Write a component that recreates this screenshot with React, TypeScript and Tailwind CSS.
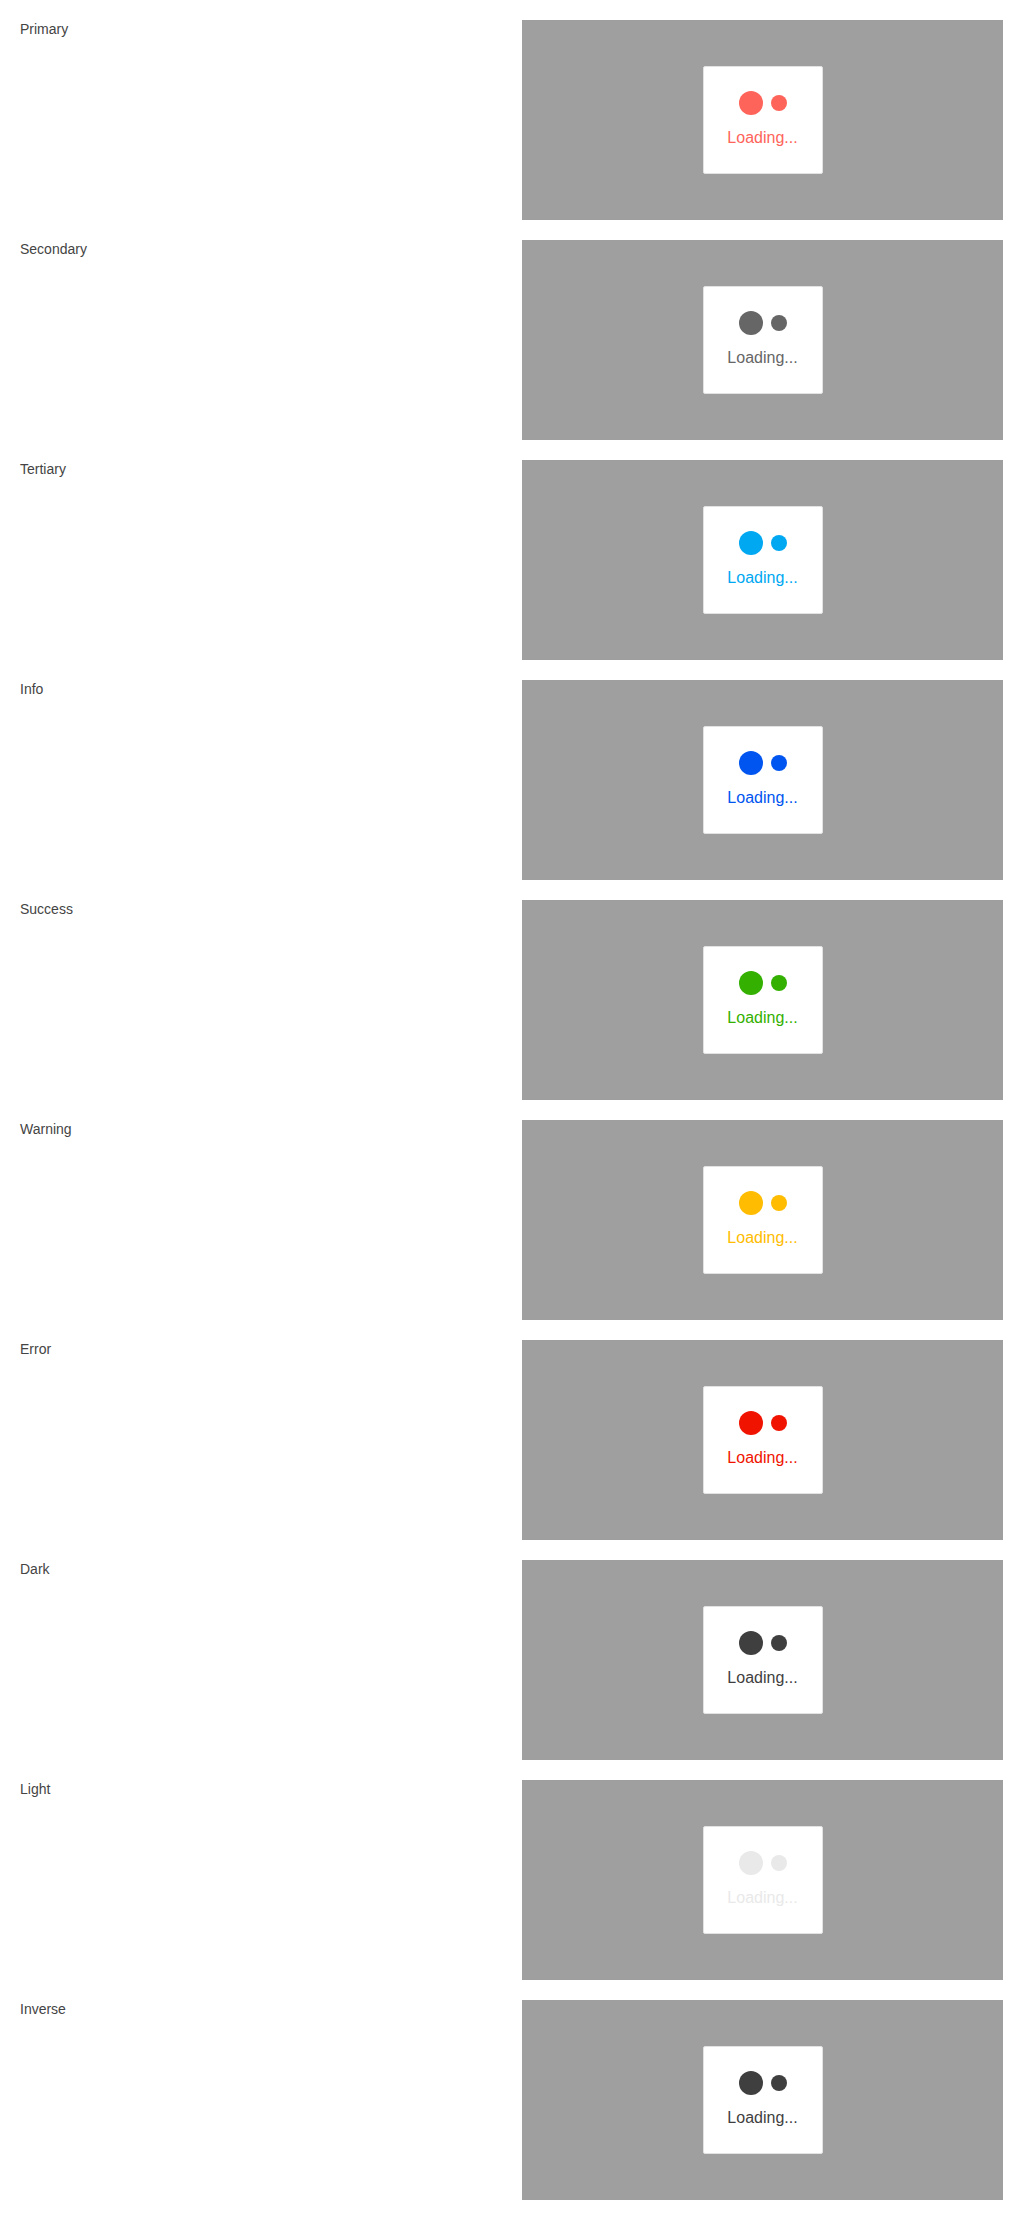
import React from "react";

const rows: { label: string; dot: string; text: string }[] = [
  { label: "Primary", dot: "bg-[#ff645a]", text: "text-[#ff645a]" },
  { label: "Secondary", dot: "bg-[#666666]", text: "text-[#666666]" },
  { label: "Tertiary", dot: "bg-[#00a8f2]", text: "text-[#00a8f2]" },
  { label: "Info", dot: "bg-[#0055f0]", text: "text-[#0055f0]" },
  { label: "Success", dot: "bg-[#33b000]", text: "text-[#33b000]" },
  { label: "Warning", dot: "bg-[#ffbc00]", text: "text-[#ffbc00]" },
  { label: "Error", dot: "bg-[#f01400]", text: "text-[#f01400]" },
  { label: "Dark", dot: "bg-[#3f3f3f]", text: "text-[#3f3f3f]" },
  { label: "Light", dot: "bg-[#e9e9e9]", text: "text-[#e9e9e9]" },
  { label: "Inverse", dot: "bg-[#3f3f3f]", text: "text-[#3f3f3f]" },
];

export default function App() {
  return (
    <div className="w-[1024px] bg-white pt-5 font-['Liberation_Sans',Arial,sans-serif]">
      {rows.map((r) => (
        <div key={r.label} className="flex h-[220px] pb-5">
          <div className="w-[522px] pl-5 text-[14px] leading-[18px] text-[#444444]">
            <div>{r.label}</div>
          </div>
          <div className="flex h-[200px] w-[481px] items-center justify-center bg-[#9f9f9f]">
            <div className="flex h-[108px] w-[120px] flex-col items-center rounded-[2px] border border-[#e2e2e2] bg-white pt-[24px]">
              <div className="flex h-6 items-center gap-2">
                <span className={`block h-6 w-6 rounded-full ${r.dot}`} />
                <span className={`block h-4 w-4 rounded-full ${r.dot}`} />
              </div>
              <div className={`mt-[11px] text-[16px] leading-[24px] ${r.text}`}>Loading...</div>
            </div>
          </div>
        </div>
      ))}
    </div>
  );
}
